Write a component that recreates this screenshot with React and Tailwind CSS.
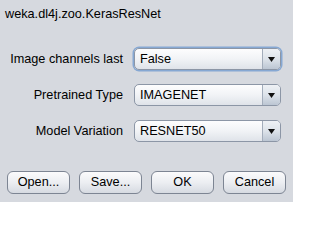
import React from "react";

function Combo({ value, focused }) {
  return (
    <div
      className={
        "flex h-[22px] w-[147px] rounded-[5px] border border-[#8c96a6] bg-gradient-to-b from-[#fdfdfe] via-[#f1f3f6] to-[#dfe3e9] " +
        (focused ? "shadow-[0_0_0_1.5px_#86a8d3]" : "")
      }
    >
      <div className="flex flex-1 items-center pl-[5px] text-[12.7px] leading-none text-black">{value}</div>
      <div className="flex w-[18px] items-center justify-center rounded-r-[4px] border-l border-[#a3adbb] bg-gradient-to-b from-[#eef1f5] via-[#dde3ea] to-[#bcc6d3]">
        <svg width="7" height="5" viewBox="0 0 7 5">
          <path d="M0 0 H7 L3.5 5 Z" fill="#111" />
        </svg>
      </div>
    </div>
  );
}

function Btn({ children }) {
  return (
    <div className="flex h-[23px] w-[63px] items-center justify-center rounded-[6px] border border-[#7d8593] bg-gradient-to-b from-[#fbfbfc] via-[#eceef2] to-[#d6dae1] text-[12.7px] leading-none text-black">
      {children}
    </div>
  );
}

export default function App() {
  return (
    <div
      className="flex h-[202px] w-[293px] flex-col bg-[#d6d9df] text-black"
      style={{ fontFamily: '"Liberation Sans", Arial, sans-serif' }}
    >
      <div className="pl-[5px] pt-[7px] text-[12.7px] leading-[14px]">weka.dl4j.zoo.KerasResNet</div>
      <div className="mt-[27px] grid grid-cols-[123px_147px] items-center gap-x-[11px] gap-y-[14px]">
        <div className="text-right text-[12.7px] leading-none">Image channels last</div>
        <Combo value="False" focused />
        <div className="text-right text-[12.7px] leading-none">Pretrained Type</div>
        <Combo value="IMAGENET" />
        <div className="text-right text-[12.7px] leading-none">Model Variation</div>
        <Combo value="RESNET50" />
      </div>
      <div className="mt-[29px] flex gap-[9px] pl-[7px]">
        <Btn>Open...</Btn>
        <Btn>Save...</Btn>
        <Btn>OK</Btn>
        <Btn>Cancel</Btn>
      </div>
    </div>
  );
}
